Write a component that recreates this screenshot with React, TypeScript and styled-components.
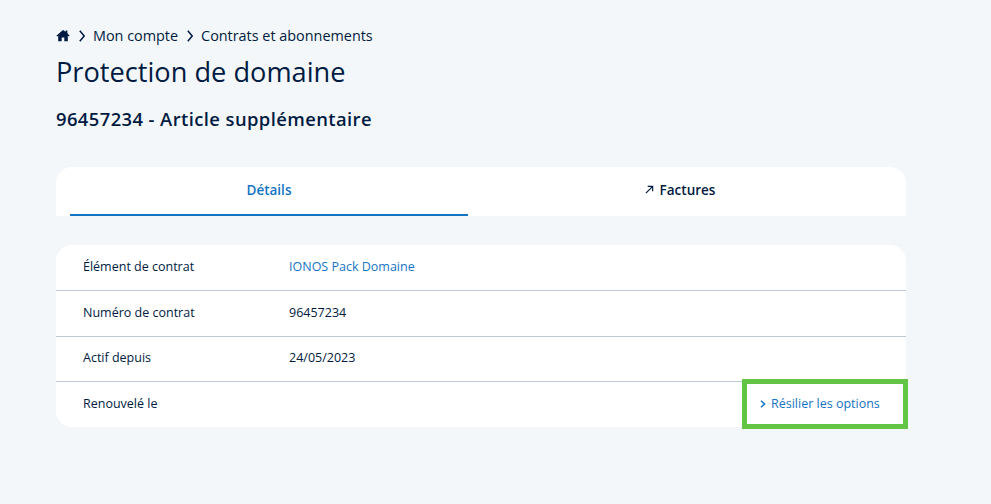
import * as React from 'react';
import styled, { createGlobalStyle } from 'styled-components';

const GlobalStyle = createGlobalStyle`
  html, body {
    margin: 0;
    padding: 0;
    background: #f4f7fa;
  }
  body {
    font-family: "Open Sans", "Noto Sans", sans-serif;
    color: #001b41;
  }
`;

const Colors = {
  navy: '#001b41',
  blue: '#1474c4',
  line: '#bcc8d4',
  green: '#62c545',
};

const rows = [
  { label: 'Élément de contrat', value: 'IONOS Pack Domaine', link: true },
  { label: 'Numéro de contrat', value: '96457234' },
  { label: 'Actif depuis', value: '24/05/2023' },
  { label: 'Renouvelé le', action: 'Résilier les options' },
];

const App: React.FC = () => (
  <Page>
    <GlobalStyle />
    <Breadcrumb>
      <HomeIcon viewBox="0 0 16 14">
        <path d="M8 0.6 0.4 7.2l.9 1L2.5 7.2V13.6h4V9.4h3v4.2h4V7.2l1.2 1 .9-1L13 4.4V1.2h-2v1.5z" fill="currentColor" />
      </HomeIcon>
      <Chevron viewBox="0 0 6 12"><path d="M.8.8 5.2 6 .8 11.2" /></Chevron>
      <Crumb>Mon compte</Crumb>
      <Chevron viewBox="0 0 6 12"><path d="M.8.8 5.2 6 .8 11.2" /></Chevron>
      <Crumb>Contrats et abonnements</Crumb>
    </Breadcrumb>
    <Title>Protection de domaine</Title>
    <Subtitle>96457234 - Article supplémentaire</Subtitle>
    <Tabs>
      <Tab $active>Détails</Tab>
      <Tab>
        <ArrowIcon viewBox="0 0 10 10"><path d="M1 9 8.5 1.5M3 1.5h5.5V7" /></ArrowIcon>
        Factures
      </Tab>
    </Tabs>
    <Card>
      {rows.map((r) => (
        <Row key={r.label}>
          <Label>{r.label}</Label>
          <Value $link={r.link}>{r.value}</Value>
          {r.action && (
            <Action>
              <ActionChevron viewBox="0 0 6 8"><path d="M1 .8 4.6 4 1 7.2" /></ActionChevron>
              {r.action}
            </Action>
          )}
        </Row>
      ))}
    </Card>
  </Page>
);

export default App;

const Page = styled.div`
  width: 850px;
  height: 504px;
  box-sizing: border-box;
  margin-left: 56px;
  padding-top: 26px;
`;

const Breadcrumb = styled.nav`
  display: flex;
  align-items: center;
  height: 19px;
  font-size: 14.4px;
  line-height: 19px;
  color: ${Colors.navy};
`;

const HomeIcon = styled.svg`
  width: 14px;
  height: 13px;
  color: ${Colors.navy};
`;

const Chevron = styled.svg`
  width: 6px;
  height: 12px;
  margin: 0 8px 0 9px;
  fill: none;
  stroke: ${Colors.navy};
  stroke-width: 1.5;
`;

const Crumb = styled.span`
  white-space: nowrap;
`;

const Title = styled.h1`
  margin: 7px 0 0;
  font-size: 27.2px;
  line-height: 40px;
  font-weight: 400;
  color: ${Colors.navy};
`;

const Subtitle = styled.h2`
  margin: 13px 0 0;
  font-size: 18.4px;
  line-height: 28px;
  font-weight: 600;
  letter-spacing: 0.41px;
  color: ${Colors.navy};
`;

const Tabs = styled.div`
  display: grid;
  grid-template-columns: 398px 1fr;
  height: 49px;
  margin-top: 34px;
  padding: 0 14px;
  background: #fff;
  border-radius: 16px 16px 0 0;
`;

const Tab = styled.div<{ $active?: boolean }>`
  display: flex;
  align-items: center;
  justify-content: center;
  padding-bottom: 2px;
  box-sizing: border-box;
  font-size: 13.5px;
  font-weight: 600;
  color: ${(p) => (p.$active ? Colors.blue : Colors.navy)};
  border-bottom: 2px solid ${(p) => (p.$active ? Colors.blue : 'transparent')};
`;

const ArrowIcon = styled.svg`
  width: 9px;
  height: 9px;
  margin-right: 6px;
  fill: none;
  stroke: ${Colors.navy};
  stroke-width: 1.3;
`;

const Card = styled.div`
  position: relative;
  margin-top: 29px;
  padding-bottom: 1px;
  background: #fff;
  border-radius: 16px;
`;

const Row = styled.div`
  position: relative;
  display: grid;
  grid-template-columns: 206px 1fr;
  align-items: center;
  height: 45.33px;
  box-sizing: border-box;
  padding: 0 0 2px 27px;
  font-size: 12.5px;
  & + & {
    border-top: 1px solid ${Colors.line};
  }
`;

const Label = styled.span`
  color: ${Colors.navy};
`;

const Value = styled.span<{ $link?: boolean }>`
  color: ${(p) => (p.$link ? Colors.blue : Colors.navy)};
`;

// surligné en vert par-dessus la ligne
const Action = styled.a`
  position: absolute;
  right: -2px;
  top: -3px;
  width: 166px;
  height: 50px;
  box-sizing: border-box;
  display: flex;
  align-items: center;
  padding-left: 13px;
  border: 5px solid ${Colors.green};
  background: #fff;
  color: ${Colors.blue};
  font-size: 12.5px;
`;

const ActionChevron = styled.svg`
  width: 6px;
  height: 8px;
  margin-right: 5px;
  fill: none;
  stroke: ${Colors.blue};
  stroke-width: 1.5;
`;
